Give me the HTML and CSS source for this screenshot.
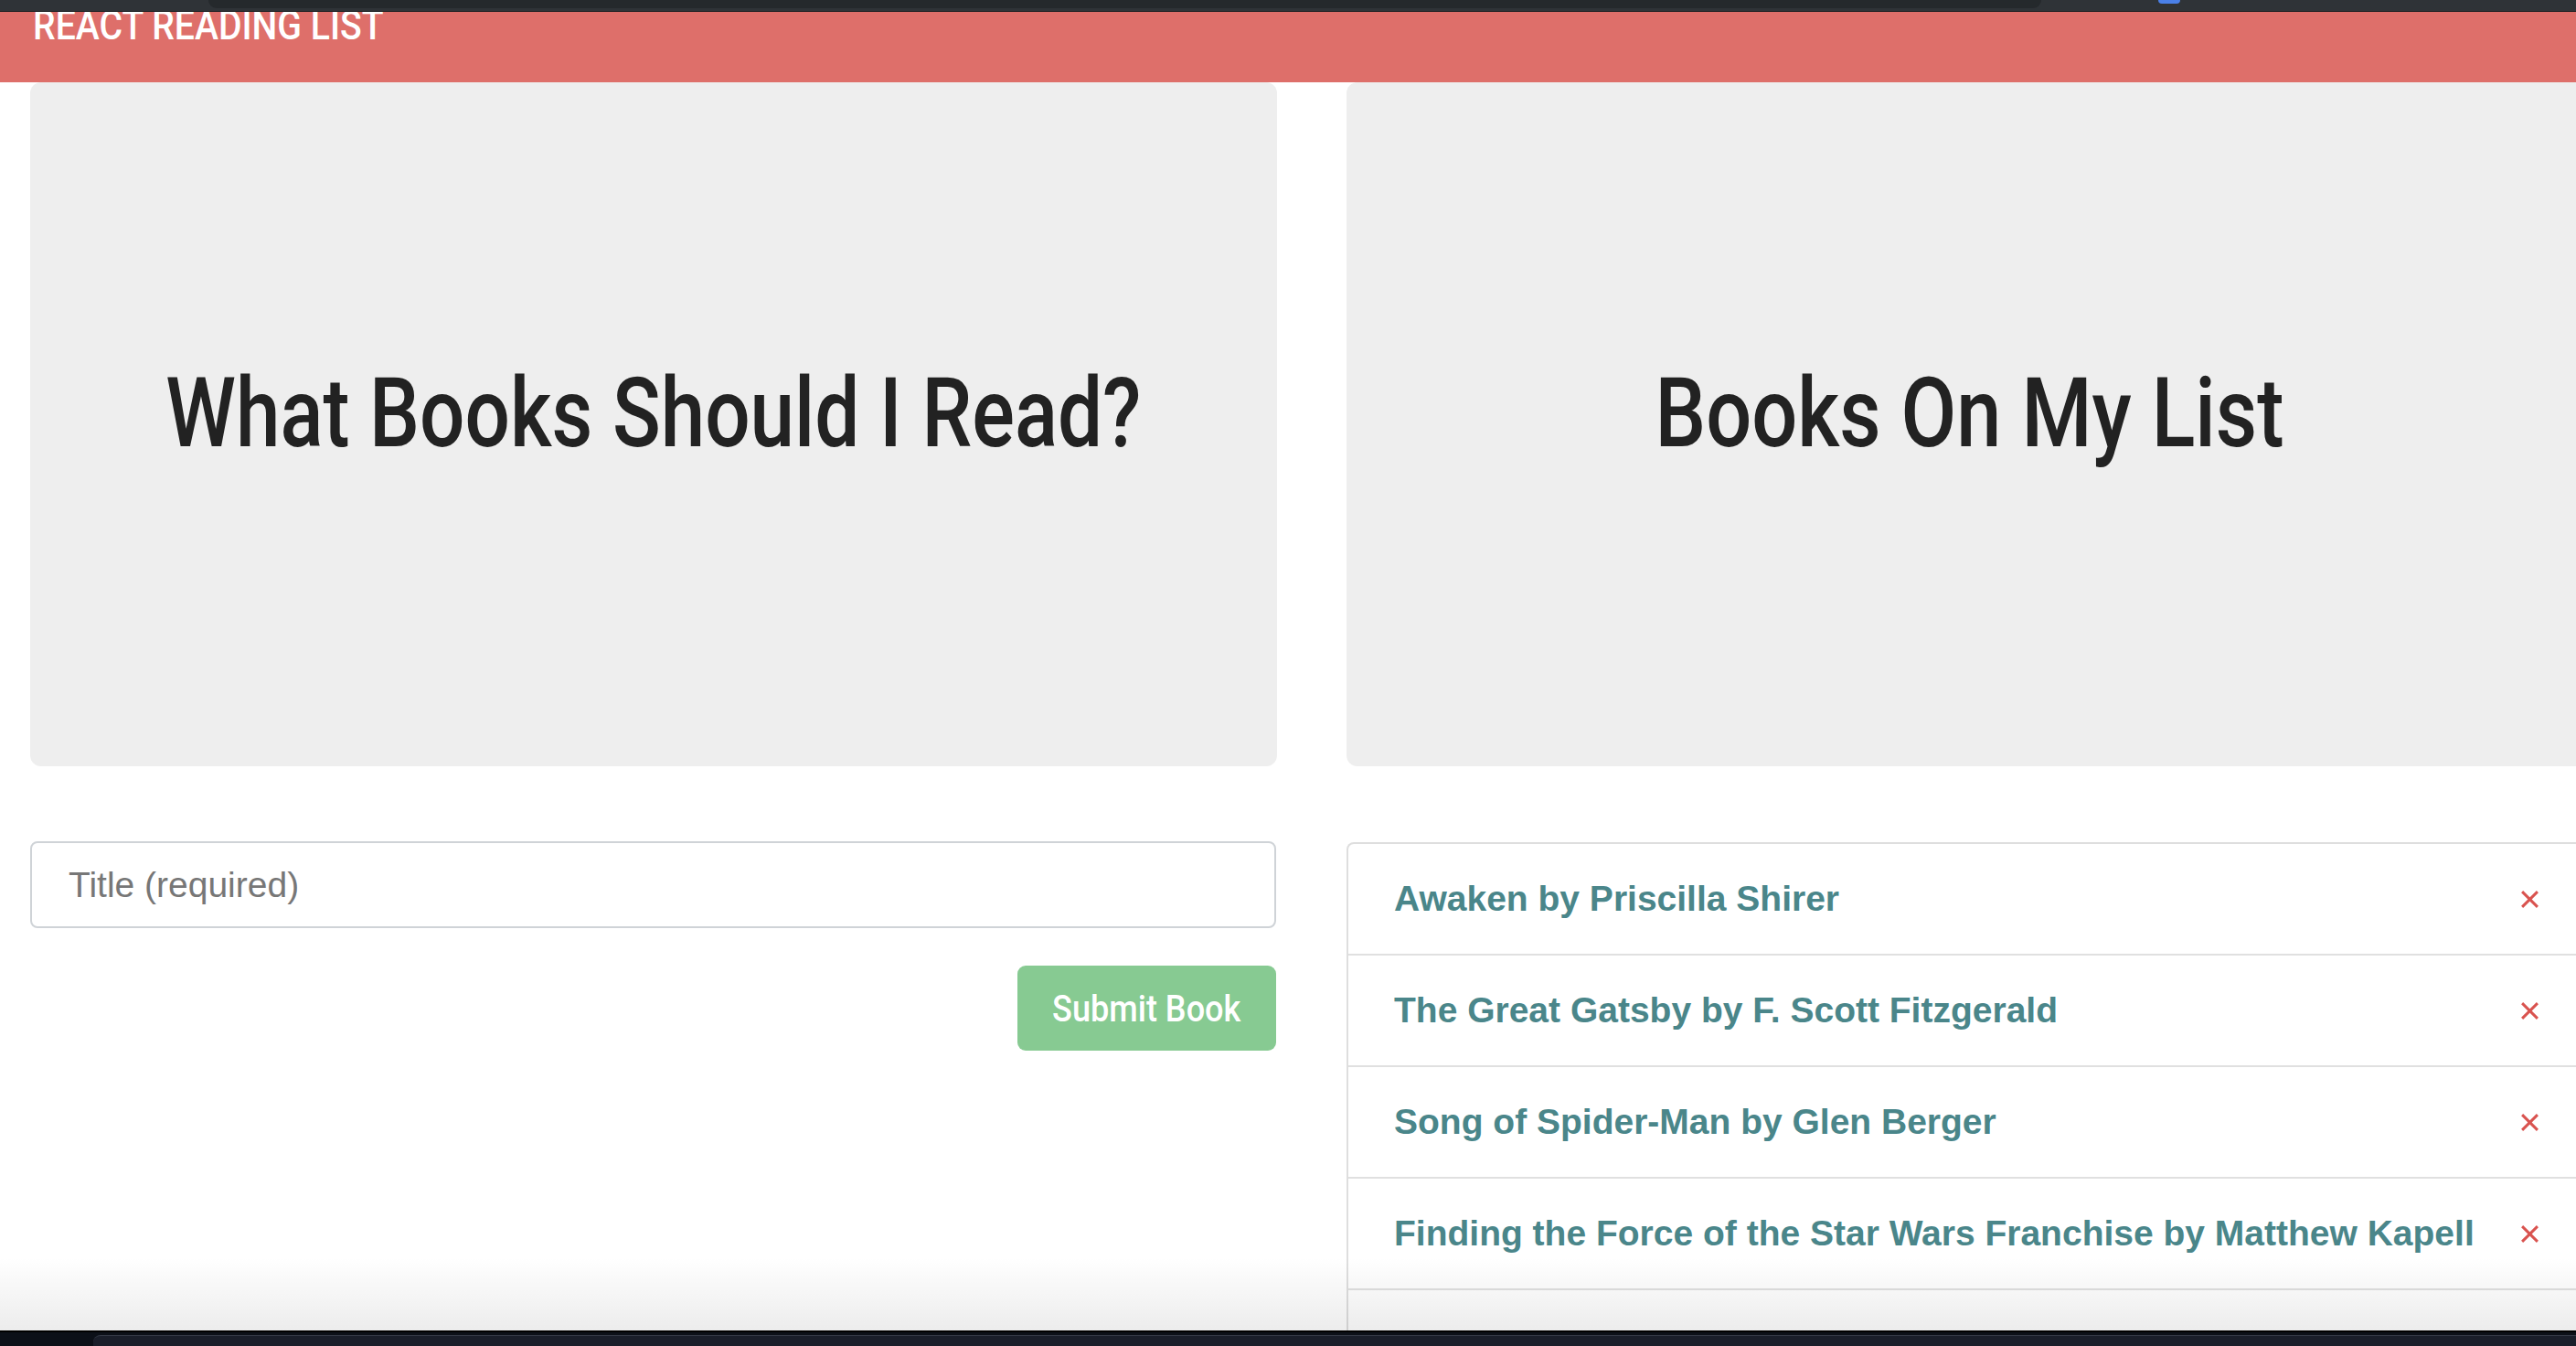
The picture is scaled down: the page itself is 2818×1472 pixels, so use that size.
FILE: index.html
```html
<!DOCTYPE html>
<html lang="en">
<head>
<meta charset="utf-8">
<title>React Reading List</title>
<link rel="stylesheet" href="styles.css">
</head>
<body>
<div class="chrome-top">
  <div class="chrome-tab"></div>
  <div class="chrome-dot"></div>
</div>
<header class="navbar">
  <span class="brand">REACT READING LIST</span>
</header>
<main class="container">
  <section class="col">
    <div class="jumbotron"><h1 class="title"><span class="title-text title-left">What Books Should I Read?</span></h1></div>
    <form class="book-form">
      <input class="form-input" type="text" placeholder="Title (required)">
      <div class="form-actions"><button class="btn-submit" type="button"><span class="btn-text">Submit Book</span></button></div>
    </form>
  </section>
  <section class="col">
    <div class="jumbotron"><h1 class="title"><span class="title-text title-right">Books On My List</span></h1></div>
    <ul class="list-group">
      <li class="list-item"><span class="book">Awaken by Priscilla Shirer</span><svg class="close" viewBox="0 0 20 20"><path d="M2 2L18 18M18 2L2 18"/></svg></li>
      <li class="list-item"><span class="book">The Great Gatsby by F. Scott Fitzgerald</span><svg class="close" viewBox="0 0 20 20"><path d="M2 2L18 18M18 2L2 18"/></svg></li>
      <li class="list-item"><span class="book">Song of Spider-Man by Glen Berger</span><svg class="close" viewBox="0 0 20 20"><path d="M2 2L18 18M18 2L2 18"/></svg></li>
      <li class="list-item"><span class="book">Finding the Force of the Star Wars Franchise by Matthew Kapell</span><svg class="close" viewBox="0 0 20 20"><path d="M2 2L18 18M18 2L2 18"/></svg></li>
      <li class="list-item"><span class="book">&nbsp;</span></li>
    </ul>
  </section>
</main>
<div class="window-shadow"></div>
<div class="dock"><div class="dock-panel"></div></div>
</body>
</html>
```
FILE: styles.css
```css
html, body {
  margin: 0;
  padding: 0;
}
body {
  width: 2818px;
  height: 1472px;
  overflow: hidden;
  background: #ffffff;
  font-family: "Liberation Sans", Arial, sans-serif;
  position: relative;
}
.chrome-top {
  height: 12px;
  background: #2f3337;
  border-bottom: 1px solid #1d2023;
  position: relative;
  z-index: 3;
}
.chrome-tab {
  position: absolute;
  left: 228px;
  top: 0;
  width: 2005px;
  height: 9px;
  background: #25292c;
  border-radius: 0 0 10px 10px;
}
.chrome-dot {
  position: absolute;
  left: 2361px;
  top: 0;
  width: 24px;
  height: 4px;
  background: #4a80e8;
  border-radius: 0 0 4px 4px;
}
.navbar {
  height: 77px;
  background: #de6f6a;
  overflow: hidden;
  padding-left: 36px;
}
.brand {
  display: inline-block;
  font-family: Roboto, "Liberation Sans", sans-serif;
  font-weight: 500;
  font-size: 44px;
  line-height: 44px;
  margin-top: -7px;
  color: #ffffff;
  transform: scaleX(0.89);
  transform-origin: left center;
  white-space: nowrap;
}
.container {
  display: grid;
  grid-template-columns: 1364px 1364px;
  column-gap: 76px;
  padding-left: 33px;
  width: 2900px;
}
.col {
  display: flex;
  flex-direction: column;
}
.jumbotron {
  box-sizing: border-box;
  height: 748px;
  background: #eeeeee;
  border-radius: 12px;
  padding-top: 303px;
  text-align: center;
}
.title {
  margin: 0;
  font-family: Roboto, "Liberation Sans", sans-serif;
  font-weight: 500;
  font-size: 105px;
  line-height: 120px;
  color: #222222;
  white-space: nowrap;
}
.title-text {
  display: inline-block;
  transform-origin: center center;
}
.title-left {
  transform: scaleX(0.83);
}
.title-right {
  transform: scaleX(0.84);
}
.book-form {
  margin-top: 82px;
}
.form-input {
  display: block;
  box-sizing: border-box;
  width: 1363px;
  height: 95px;
  margin: 0;
  border: 2px solid #cfd3d7;
  border-radius: 8px;
  padding: 0 40px;
  font-family: "Liberation Sans", Arial, sans-serif;
  font-size: 39px;
  color: #555;
  background: #fff;
  outline: none;
}
.form-input::placeholder {
  color: #777777;
}
.form-actions {
  display: flex;
  justify-content: flex-end;
  width: 1363px;
  margin-top: 41px;
}
.btn-submit {
  width: 283px;
  height: 93px;
  border: none;
  border-radius: 9px;
  background: #87ca92;
  color: #ffffff;
  font-family: Roboto, "Liberation Sans", sans-serif;
  font-weight: 500;
  font-size: 41px;
  padding: 0;
  white-space: nowrap;
}
.btn-text {
  display: inline-block;
  transform: scaleX(0.88);
  transform-origin: center center;
}
.list-group {
  list-style: none;
  margin: 83px 0 0 0;
  padding: 0;
  border: 2px solid #dedede;
  border-bottom: none;
  border-radius: 8px 8px 0 0;
}
.list-item {
  box-sizing: border-box;
  height: 122px;
  border-bottom: 2px solid #e0e0e0;
  display: flex;
  align-items: center;
  justify-content: space-between;
  padding: 0 57px 0 50px;
}
.book {
  font-family: "Liberation Sans", Arial, sans-serif;
  font-weight: bold;
  font-size: 39px;
  color: #4a868a;
}
.close {
  width: 21px;
  height: 21px;
  flex: none;
  fill: none;
  stroke: #d9534f;
  stroke-width: 2.8;
}
.window-shadow {
  position: absolute;
  left: 0;
  right: 0;
  bottom: 17px;
  height: 80px;
  background: linear-gradient(to bottom, rgba(0,0,0,0), rgba(0,0,0,0.075));
  pointer-events: none;
}
.dock {
  position: absolute;
  left: 0;
  right: 0;
  bottom: 0;
  height: 15px;
  background: #0c1018;
  border-top: 2px solid #000;
}
.dock-panel {
  margin: 3px 0 0 102px;
  height: 12px;
  background: #1a1e2a;
  border-top: 1px solid #333844;
  border-radius: 8px 0 0 0;
}
```
